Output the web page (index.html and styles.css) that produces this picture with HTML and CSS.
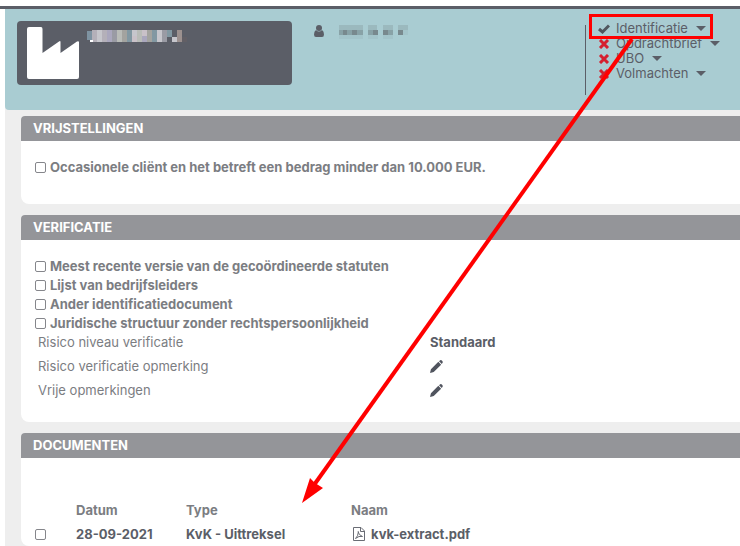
FILE: index.html
```html
<!DOCTYPE html>
<html lang="nl">
<head>
  <meta charset="UTF-8">
  <meta name="viewport" content="width=device-width, initial-scale=1.0">
  <title>Identificatie</title>
  <link rel="stylesheet" href="styles.css">
</head>
<body>
  <div class="topbar"></div>

  <div class="page">
    <header class="client">
      <div class="client-card">
        <svg class="factory" viewBox="0 0 52 52" aria-hidden="true">
          <path fill="#fff" d="M2 0H14Q15.500 0 15.500 2V26L32 14.500Q33.500 13.500 33.500 15V26L50 14.500Q52 13.500 52 15.500V50Q52 52 50 52H2Q0 52 0 50V2Q0 0 2 0Z"/>
        </svg>
        <svg class="client-name" viewBox="0 0 100 13" shape-rendering="crispEdges" aria-hidden="true">
          <path fill="#7e93a2" d="M0 1h5v9H0z"/>
          <path fill="#b4b0b9" d="M5 0h5v12H5zM15 0h5v12h-5z"/>
          <path fill="#c6c6cc" d="M10 0h5v12h-5zM45 0h5v6h-5zM70 0h5v12h-5zM85 7h5v5h-5z"/>
          <path fill="#aaa7bd" d="M20 0h5v12h-5zM55 6h5v6h-5z"/>
          <path fill="#9a9ba4" d="M25 0h5v12h-5zM75 0h5v12h-5z"/>
          <path fill="#b9bcb8" d="M30 0h5v12h-5zM50 0h5v12h-5z"/>
          <path fill="#a3a39f" d="M35 0h5v12h-5zM60 0h5v12h-5z"/>
          <path fill="#8298a2" d="M40 0h5v12h-5zM65 0h5v12h-5zM80 0h5v7h-5z"/>
          <path fill="#c9c1c8" d="M45 6h5v6h-5zM55 0h5v6h-5z"/>
          <path fill="#9c918f" d="M90 0h5v12h-5z"/>
          <path fill="#625f65" d="M95 7h5v5h-5z"/>
          <path fill="#fff" d="M3 10h3v2H3z"/>
        </svg>
      </div>

      <div class="contact">
        <svg class="person" viewBox="0 0 10 12" aria-hidden="true">
          <circle cx="5" cy="3" r="3" fill="#5b5e67"/>
          <path fill="#5b5e67" d="M2 5Q5 8 8 5Q10 6 10 9.500Q10 12 8 12H2Q0 12 0 9.500Q0 6 2 5Z"/>
        </svg>
        <svg class="contact-name" viewBox="0 0 70 14" shape-rendering="crispEdges" aria-hidden="true">
          <path fill="#9bb9be" d="M0 0h24v5H0zM29 0h9v5h-9zM44 0h10v5H44zM59 0h10v5H59z"/>
          <path fill="#88a2a7" d="M0 5h4v5H0zM8 5h5v5H8zM18 5h6v5h-6zM29 5h5v5h-5zM49 5h5v5h-5z"/>
          <path fill="#78898e" d="M4 5h4v5H4zM13 5h5v5h-5zM34 5h5v5h-5zM44 5h5v5h-5zM59 5h5v5h-5z"/>
          <path fill="#a3c4ca" d="M0 10h24v4H0zM29 10h10v4H29zM44 10h10v4H44zM64 5h5v5h-5z"/>
        </svg>
      </div>

      <nav class="status">
        <button type="button" class="status-item">
          <svg class="mark" viewBox="0 0 12 10" aria-hidden="true"><path fill="none" stroke="#50565e" stroke-width="3" d="M1 5L4.500 8L11 1.500"/></svg>
          Identificatie
          <span class="caret"></span>
        </button>
        <button type="button" class="status-item">
          <svg class="mark" viewBox="0 0 12 10" aria-hidden="true"><path fill="none" stroke="#d5202f" stroke-width="3" d="M2 1L10 9M10 1L2 9"/></svg>
          Opdrachtbrief
          <span class="caret"></span>
        </button>
        <button type="button" class="status-item">
          <svg class="mark" viewBox="0 0 12 10" aria-hidden="true"><path fill="none" stroke="#d5202f" stroke-width="3" d="M2 1L10 9M10 1L2 9"/></svg>
          UBO
          <span class="caret"></span>
        </button>
        <button type="button" class="status-item">
          <svg class="mark" viewBox="0 0 12 10" aria-hidden="true"><path fill="none" stroke="#d5202f" stroke-width="3" d="M2 1L10 9M10 1L2 9"/></svg>
          Volmachten
          <span class="caret"></span>
        </button>
      </nav>
    </header>

    <main class="panels">
      <section class="panel">
        <h2>VRIJSTELLINGEN</h2>
        <div class="panel-body exemptions">
          <label class="check"><input type="checkbox"> Occasionele cliënt en het betreft een bedrag minder dan 10.000 EUR.</label>
        </div>
      </section>

      <section class="panel">
        <h2>VERIFICATIE</h2>
        <div class="panel-body">
          <label class="check"><input type="checkbox"> Meest recente versie van de gecoördineerde statuten</label>
          <label class="check"><input type="checkbox"> Lijst van bedrijfsleiders</label>
          <label class="check"><input type="checkbox"> Ander identificatiedocument</label>
          <label class="check"><input type="checkbox"> Juridische structuur zonder rechtspersoonlijkheid</label>
          <dl class="fields">
            <dt>Risico niveau verificatie</dt>
            <dd>Standaard</dd>
            <dt>Risico verificatie opmerking</dt>
            <dd>
              <button type="button" class="edit" aria-label="Risico verificatie opmerking bewerken">
                <svg viewBox="0 0 14 14" aria-hidden="true"><path fill="#50545e" d="M0 14L1 10L9 2L12 5L4 13ZM9.700 1.300L11 0.300Q12 -0.300 13 0.700Q14.300 2 13.500 3L12.700 4.300Z"/></svg>
              </button>
            </dd>
            <dt>Vrije opmerkingen</dt>
            <dd>
              <button type="button" class="edit" aria-label="Vrije opmerkingen bewerken">
                <svg viewBox="0 0 14 14" aria-hidden="true"><path fill="#50545e" d="M0 14L1 10L9 2L12 5L4 13ZM9.700 1.300L11 0.300Q12 -0.300 13 0.700Q14.300 2 13.500 3L12.700 4.300Z"/></svg>
              </button>
            </dd>
          </dl>
        </div>
      </section>

      <section class="panel documents">
        <h2>DOCUMENTEN</h2>
        <table>
          <thead>
            <tr>
              <th class="col-check"></th>
              <th class="col-date">Datum</th>
              <th class="col-type">Type</th>
              <th>Naam</th>
            </tr>
          </thead>
          <tbody>
            <tr>
              <td><input type="checkbox" aria-label="kvk-extract.pdf selecteren"></td>
              <td>28-09-2021</td>
              <td>KvK - Uittreksel</td>
              <td>
                <a href="#" class="file">
                  <svg viewBox="0 0 12 14" aria-hidden="true">
                    <path fill="none" stroke="#6a6d75" d="M0.500 0.500H8L11.500 4V13.500H0.500ZM7.500 0.500V4.500H11.500"/>
                    <path fill="none" stroke="#6a6d75" d="M5 4.500Q5.500 8 9.500 9.500Q6 8.500 2.500 11.500Q5 9.500 5.500 4.500"/>
                  </svg>
                  kvk-extract.pdf
                </a>
              </td>
            </tr>
          </tbody>
        </table>
      </section>
    </main>
  </div>

  <!-- highlight box and arrow over the page -->
  <svg class="pointer" viewBox="0 0 740 546" aria-hidden="true">
    <rect x="590.500" y="15.500" width="121" height="22" fill="none" stroke="#f00" stroke-width="3"/>
    <path fill="none" stroke="#f00" stroke-width="4" d="M632 39L314 485"/>
    <path fill="#f00" d="M302 503L310 478L315 483L323 488Z"/>
  </svg>
</body>
</html>
```
FILE: styles.css
```css
* {
  box-sizing: border-box;
}
body {
  margin: 0;
  padding-top: 6px;
  height: 100vh;
  overflow: hidden;
  display: flex;
  flex-direction: column;
  position: relative;
  background: #fff;
  color: #7b7d82;
  font-family: Inter, "Liberation Sans", sans-serif;
  font-size: 13px;
}
button {
  margin: 0;
  padding: 0;
  border: 0;
  background: none;
  color: inherit;
  font: inherit;
  cursor: pointer;
}
.topbar {
  flex: none;
  height: 3px;
  background: #5b5e67;
}
.page {
  flex: 1;
  display: flex;
  flex-direction: column;
  margin-left: 5px;
  background: #eee;
}
/* Client header */
.client {
  display: flex;
  height: 101px;
  padding: 12px 0 0 12px;
  background: #a9ccd2;
  border-bottom-left-radius: 4px;
}
.client-card {
  display: flex;
  align-items: flex-start;
  gap: 8px;
  width: 275px;
  height: 64px;
  padding: 6px 10px;
  border-radius: 4px;
  background: #5b5e67;
}
.factory {
  width: 52px;
  height: 52px;
}
.client-name {
  width: 100px;
  height: 13px;
  margin-top: 3px;
}
.contact {
  display: flex;
  align-items: flex-start;
  gap: 15px;
  flex: 1;
  padding: 4px 0 0 22px;
}
.person {
  width: 10px;
  height: 12px;
}
.contact-name {
  width: 70px;
  height: 14px;
}
.status {
  display: flex;
  flex-direction: column;
  align-items: flex-start;
  width: 155px;
  height: 70px;
  margin-top: 4px;
  padding: 0 0 0 12px;
  border-left: 1px solid #5b5e67;
  color: #5b5e67;
}
.status-item {
  display: flex;
  align-items: center;
  height: 15px;
  line-height: 15px;
  margin-top: -4px;
  margin-bottom: 4px;
}
.mark {
  width: 12px;
  height: 10px;
  margin-right: 6px;
}
.caret {
  margin-left: 8px;
  border: 5px solid transparent;
  border-top-color: #5b5e67;
  border-bottom: 0;
}
/* Panels */
.panels {
  flex: 1;
  display: flex;
  flex-direction: column;
  gap: 11px;
  padding: 6px 0 0 16px;
}
.panel {
  background: #fff;
  border-radius: 4px 0 0 8px;
}
.panel h2 {
  margin: 0;
  padding-left: 12px;
  border-radius: 4px 0 0 0;
  background: #949599;
  color: #fff;
  font-size: 13px;
  font-weight: 700;
  line-height: 25px;
}
.panel-body {
  padding: 17px 14px 20px;
}
.exemptions {
  padding-bottom: 27px;
}
.check {
  display: flex;
  align-items: center;
  gap: 4px;
  font-weight: 700;
  line-height: 19px;
}
input[type="checkbox"] {
  appearance: none;
  width: 11px;
  height: 11px;
  margin: 0;
  border: 1px solid #85868b;
  border-radius: 2px;
  background: #fff;
}
.fields {
  display: grid;
  grid-template-columns: 392px 1fr;
  margin: -3px 0 0;
  padding-left: 3px;
  line-height: 24px;
}
.fields dt,
.fields dd {
  margin: 0;
}
.fields dd {
  color: #5b5e67;
  font-weight: 700;
}
.edit {
  display: flex;
  align-items: center;
  height: 24px;
}
.edit svg {
  width: 13px;
  height: 13px;
}
/* Documents */
.documents {
  flex: 1;
}
.documents table {
  width: 100%;
  margin-top: 40px;
  border-collapse: collapse;
  table-layout: fixed;
}
.documents th,
.documents td {
  height: 24px;
  padding: 0;
  text-align: left;
  font-weight: 700;
}
.documents td {
  color: #5b5e67;
}
.documents th:first-child,
.documents td:first-child {
  padding-left: 14px;
}
.documents td input {
  display: block;
}
.col-check {
  width: 55px;
}
.col-date {
  width: 110px;
}
.col-type {
  width: 165px;
}
.file {
  display: flex;
  align-items: center;
  gap: 6px;
  padding-left: 2px;
  color: inherit;
  text-decoration: none;
}
.file svg {
  width: 12px;
  height: 14px;
}
.pointer {
  position: absolute;
  top: 0;
  left: 0;
  width: 740px;
  height: 546px;
  pointer-events: none;
}
```
